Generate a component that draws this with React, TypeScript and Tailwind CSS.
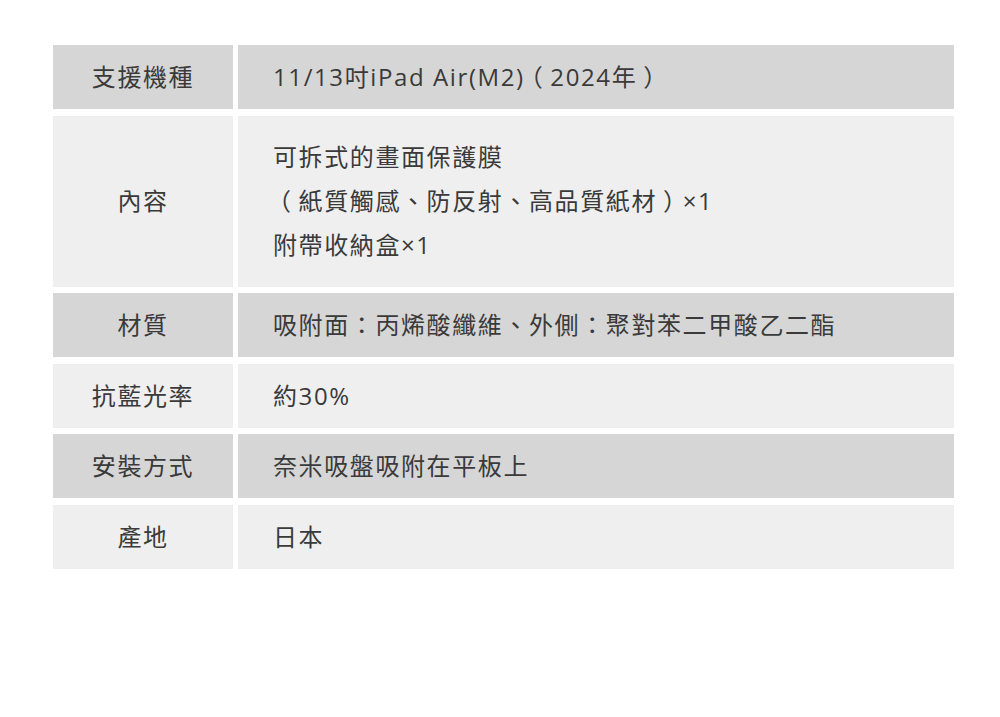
import React from 'react';

type Row = { label: string; value: string[]; dark: boolean; tall?: boolean };

const rows: Row[] = [
  { label: '支援機種', value: ['11/13吋iPad Air(M2)（2024年）'], dark: true },
  {
    label: '內容',
    value: ['可拆式的畫面保護膜', '（紙質觸感、防反射、高品質紙材）×1', '附帶收納盒×1'],
    dark: false,
    tall: true,
  },
  { label: '材質', value: ['吸附面：丙烯酸纖維、外側：聚對苯二甲酸乙二酯'], dark: true },
  { label: '抗藍光率', value: ['約30%'], dark: false },
  { label: '安裝方式', value: ['奈米吸盤吸附在平板上'], dark: true },
  { label: '產地', value: ['日本'], dark: false },
];

// full-width brackets sit centred in their cell in the original font
function Line({ text }: { text: string }) {
  const parts = text.split(/([（）])/);
  return (
    <div>
      {parts.map((p, i) =>
        p === '（' || p === '）' ? (
          <span key={i} className="px-[6px] [font-feature-settings:'halt']">
            {p}
          </span>
        ) : (
          <React.Fragment key={i}>{p}</React.Fragment>
        )
      )}
    </div>
  );
}

export default function App() {
  return (
    <div
      className="w-[1000px] h-[717px] bg-white pt-[45px] pl-[53px] text-[#3a3a3a]"
      style={{ fontFamily: '"Open Sans", "Noto Sans CJK TC", sans-serif' }}
    >
      <div className="w-[901px] grid grid-cols-[180px_1fr] gap-x-[5px] gap-y-[6.5px] text-[24px] tracking-[1.6px]">
        {rows.map((row) => {
          const bg = row.dark ? 'bg-[#d6d6d6]' : 'bg-[#efefef]';
          return (
            <React.Fragment key={row.label}>
              <div
                className={`${bg} flex items-center justify-center ${row.tall ? 'h-[171px]' : 'h-[64px]'}`}
              >
                {row.label}
              </div>
              <div
                className={`${bg} flex flex-col justify-center pl-[35px] ${row.tall ? 'h-[171px] leading-[44px]' : 'h-[64px]'}`}
              >
                {row.value.map((line) => (
                  <Line key={line} text={line} />
                ))}
              </div>
            </React.Fragment>
          );
        })}
      </div>
    </div>
  );
}
